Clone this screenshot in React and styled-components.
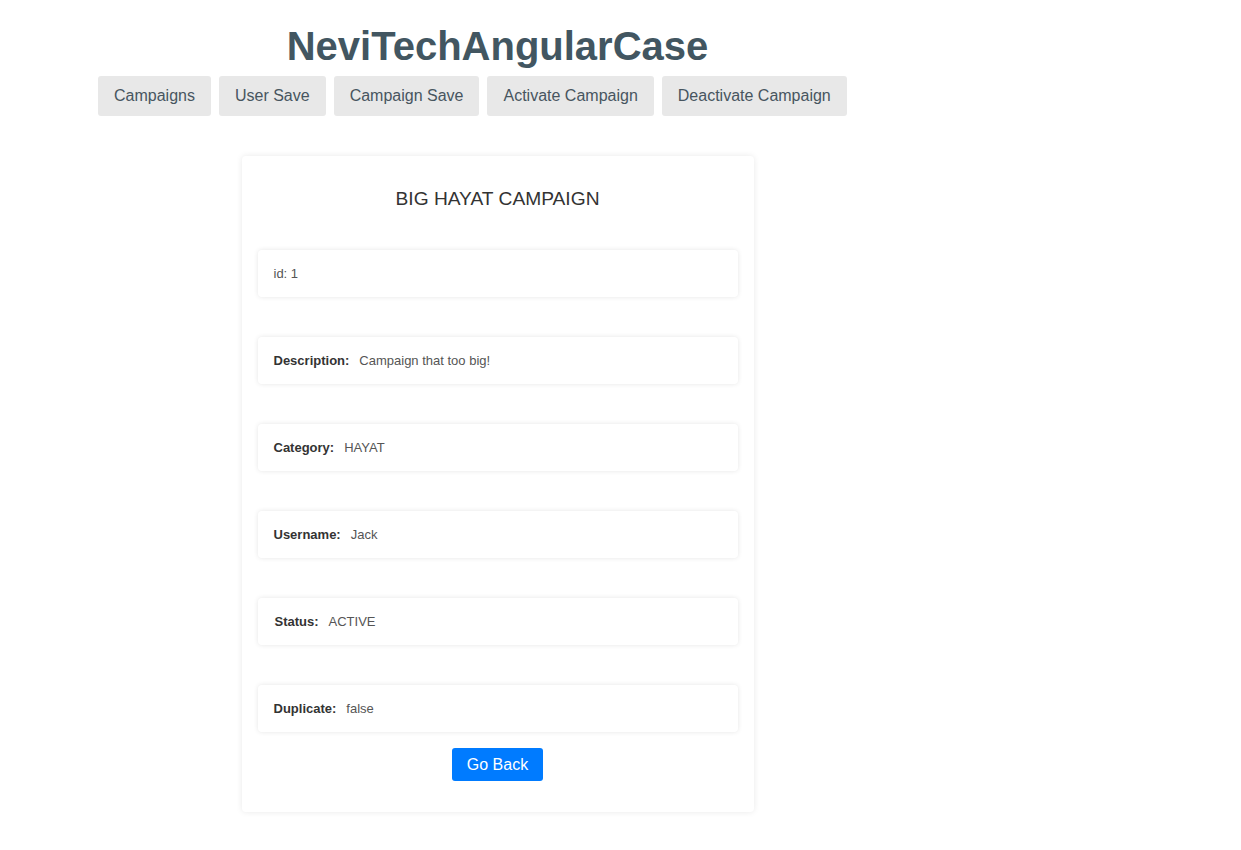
import React from "react";
import styled, { createGlobalStyle } from "styled-components";

const Global = createGlobalStyle`
  html, body { margin: 0; padding: 0; background: #ffffff; }
  body { font-family: "Liberation Sans", Arial, sans-serif; }
  * { box-sizing: border-box; }
`;

const Page = styled.div`
  width: 995px;
  display: flex;
  flex-direction: column;
  padding-bottom: 20px;
`;

const Title = styled.h1`
  margin: 23px 0 0;
  font-size: 40px;
  line-height: 46px;
  font-weight: 700;
  text-align: center;
  color: #425661;
`;

const Nav = styled.nav`
  display: flex;
  gap: 8px;
  padding-left: 98px;
  margin-top: 7px;
`;

const NavButton = styled.button`
  height: 40px;
  padding: 0 16px;
  border: none;
  border-radius: 3px;
  background: #e8e8e8;
  color: #47555f;
  font-family: "Liberation Sans", Arial, sans-serif;
  font-size: 16px;
  cursor: pointer;
`;

const Card = styled.section`
  align-self: center;
  width: 512px;
  margin-top: 40px;
  padding: 31px 16px;
  background: #fff;
  border-radius: 4px;
  box-shadow: 0 0 6px rgba(0, 0, 0, 0.09);
  display: flex;
  flex-direction: column;
  align-items: stretch;
`;

const CardTitle = styled.h2`
  margin: 0 0 39px;
  font-size: 19.2px;
  line-height: 24px;
  font-weight: 400;
  text-align: center;
  color: #333;
`;

const List = styled.div`
  display: flex;
  flex-direction: column;
  gap: 40px;
`;

const Item = styled.div`
  height: 47px;
  padding: 0 16px;
  display: flex;
  align-items: center;
  background: #fff;
  border-radius: 4px;
  box-shadow: 0 0 5px rgba(0, 0, 0, 0.1);
  font-size: 13px;
  color: #555;
`;

const Label = styled.span`
  font-weight: 700;
  color: #333;
  margin-right: 10px;
  padding-left: ${(p) => (p.$nudge ? "1px" : "0")};
`;

const Value = styled.span`
  color: #555;
`;

const BackButton = styled.button`
  align-self: center;
  margin-top: 16px;
  height: 33px;
  padding: 0 15px;
  border: none;
  border-radius: 3px;
  background: #007bff;
  color: #fff;
  font-family: "Liberation Sans", Arial, sans-serif;
  font-size: 16px;
  cursor: pointer;
`;

const navItems = [
  "Campaigns",
  "User Save",
  "Campaign Save",
  "Activate Campaign",
  "Deactivate Campaign",
];

const fields = [
  { label: "Description:", value: "Campaign that too big!" },
  { label: "Category:", value: "HAYAT" },
  { label: "Username:", value: "Jack" },
  { label: "Status:", value: "ACTIVE", nudge: true },
  { label: "Duplicate:", value: "false" },
];

export default function App() {
  return (
    <Page>
      <Global />
      <Title>NeviTechAngularCase</Title>
      <Nav>
        {navItems.map((n) => (
          <NavButton key={n}>{n}</NavButton>
        ))}
      </Nav>
      <Card>
        <CardTitle>BIG HAYAT CAMPAIGN</CardTitle>
        <List>
          <Item>
            <Value>id: 1</Value>
          </Item>
          {fields.map((f) => (
            <Item key={f.label}>
              <Label $nudge={f.nudge}>{f.label}</Label>
              <Value>{f.value}</Value>
            </Item>
          ))}
        </List>
        <BackButton>Go Back</BackButton>
      </Card>
    </Page>
  );
}
